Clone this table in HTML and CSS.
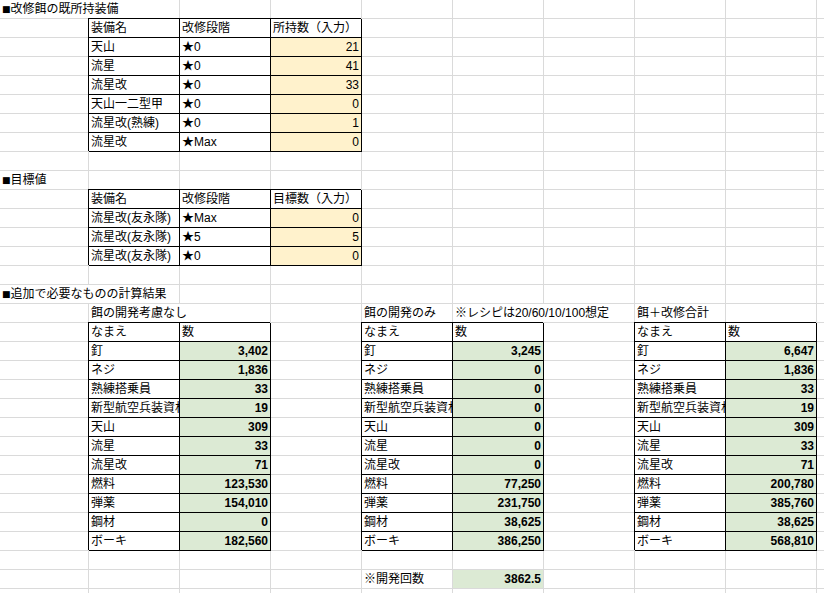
FILE: index.html
```html
<!DOCTYPE html>
<html lang="ja">
<head>
<meta charset="utf-8">
<title>改修餌</title>
<link rel="stylesheet" href="styles.css">
</head>
<body>
<div class="sheet">
<!-- 1 -->
<div class="s2"><span class="sq">■</span>改修餌の既所持装備</div><div></div><div></div><div></div><div></div><div></div><div></div><div></div><div></div>
<!-- 2 -->
<div></div><div class="t">装備名</div><div class="t">改修段階</div><div class="t">所持数（入力）</div><div></div><div></div><div></div><div></div><div></div><div></div>
<!-- 3 -->
<div></div><div class="t">天山</div><div class="t">★0</div><div class="t o n">21</div><div></div><div></div><div></div><div></div><div></div><div></div>
<div></div><div class="t">流星</div><div class="t">★0</div><div class="t o n">41</div><div></div><div></div><div></div><div></div><div></div><div></div>
<div></div><div class="t">流星改</div><div class="t">★0</div><div class="t o n">33</div><div></div><div></div><div></div><div></div><div></div><div></div>
<div></div><div class="t">天山一二型甲</div><div class="t">★0</div><div class="t o n">0</div><div></div><div></div><div></div><div></div><div></div><div></div>
<div></div><div class="t">流星改(熟練)</div><div class="t">★0</div><div class="t o n">1</div><div></div><div></div><div></div><div></div><div></div><div></div>
<div></div><div class="t">流星改</div><div class="t">★Max</div><div class="t o n">0</div><div></div><div></div><div></div><div></div><div></div><div></div>
<!-- 9 -->
<div></div><div></div><div></div><div></div><div></div><div></div><div></div><div></div><div></div><div></div>
<!-- 10 -->
<div><span class="sq">■</span>目標値</div><div></div><div></div><div></div><div></div><div></div><div></div><div></div><div></div><div></div>
<!-- 11 -->
<div></div><div class="t">装備名</div><div class="t">改修段階</div><div class="t">目標数（入力）</div><div></div><div></div><div></div><div></div><div></div><div></div>
<div></div><div class="t">流星改(友永隊)</div><div class="t">★Max</div><div class="t o n">0</div><div></div><div></div><div></div><div></div><div></div><div></div>
<div></div><div class="t">流星改(友永隊)</div><div class="t">★5</div><div class="t o n">5</div><div></div><div></div><div></div><div></div><div></div><div></div>
<div></div><div class="t">流星改(友永隊)</div><div class="t">★0</div><div class="t o n">0</div><div></div><div></div><div></div><div></div><div></div><div></div>
<!-- 15 -->
<div></div><div></div><div></div><div></div><div></div><div></div><div></div><div></div><div></div><div></div>
<!-- 16 -->
<div class="s2"><span class="sq">■</span>追加で必要なものの計算結果</div><div></div><div></div><div></div><div></div><div></div><div></div><div></div><div></div>
<!-- 17 -->
<div></div><div class="s2">餌の開発考慮なし</div><div></div><div>餌の開発のみ</div><div class="s2">※レシピは20/60/10/100想定</div><div>餌＋改修合計</div><div></div><div></div>
<!-- 18 -->
<div></div><div class="t">なまえ</div><div class="t">数</div><div></div><div class="t">なまえ</div><div class="t">数</div><div></div><div class="t">なまえ</div><div class="t">数</div><div></div>
<!-- 19-29 -->
<div></div><div class="t">釘</div><div class="t g n b">3,402</div><div></div><div class="t">釘</div><div class="t g n b">3,245</div><div></div><div class="t">釘</div><div class="t g n b">6,647</div><div></div>
<div></div><div class="t">ネジ</div><div class="t g n b">1,836</div><div></div><div class="t">ネジ</div><div class="t g n b">0</div><div></div><div class="t">ネジ</div><div class="t g n b">1,836</div><div></div>
<div></div><div class="t">熟練搭乗員</div><div class="t g n b">33</div><div></div><div class="t">熟練搭乗員</div><div class="t g n b">0</div><div></div><div class="t">熟練搭乗員</div><div class="t g n b">33</div><div></div>
<div></div><div class="t">新型航空兵装資材</div><div class="t g n b">19</div><div></div><div class="t">新型航空兵装資材</div><div class="t g n b">0</div><div></div><div class="t">新型航空兵装資材</div><div class="t g n b">19</div><div></div>
<div></div><div class="t">天山</div><div class="t g n b">309</div><div></div><div class="t">天山</div><div class="t g n b">0</div><div></div><div class="t">天山</div><div class="t g n b">309</div><div></div>
<div></div><div class="t">流星</div><div class="t g n b">33</div><div></div><div class="t">流星</div><div class="t g n b">0</div><div></div><div class="t">流星</div><div class="t g n b">33</div><div></div>
<div></div><div class="t">流星改</div><div class="t g n b">71</div><div></div><div class="t">流星改</div><div class="t g n b">0</div><div></div><div class="t">流星改</div><div class="t g n b">71</div><div></div>
<div></div><div class="t">燃料</div><div class="t g n b">123,530</div><div></div><div class="t">燃料</div><div class="t g n b">77,250</div><div></div><div class="t">燃料</div><div class="t g n b">200,780</div><div></div>
<div></div><div class="t">弾薬</div><div class="t g n b">154,010</div><div></div><div class="t">弾薬</div><div class="t g n b">231,750</div><div></div><div class="t">弾薬</div><div class="t g n b">385,760</div><div></div>
<div></div><div class="t">鋼材</div><div class="t g n b">0</div><div></div><div class="t">鋼材</div><div class="t g n b">38,625</div><div></div><div class="t">鋼材</div><div class="t g n b">38,625</div><div></div>
<div></div><div class="t">ボーキ</div><div class="t g n b">182,560</div><div></div><div class="t">ボーキ</div><div class="t g n b">386,250</div><div></div><div class="t">ボーキ</div><div class="t g n b">568,810</div><div></div>
<!-- 30 -->
<div></div><div></div><div></div><div></div><div></div><div></div><div></div><div></div><div></div><div></div>
<!-- 31 -->
<div></div><div></div><div></div><div></div><div>※開発回数</div><div class="g n b">3862.5</div><div></div><div></div><div></div><div></div>
<!-- 32 -->
<div></div><div></div><div></div><div></div><div></div><div></div><div></div><div></div><div></div><div></div>
</div>
</body>
</html>
```
FILE: styles.css
```css
html, body {
  margin: 0;
  padding: 0;
  background: #ffffff;
}
body {
  font-family: "Liberation Sans", "Noto Sans CJK JP", sans-serif;
  font-size: 12px;
  color: #000000;
}
.sheet {
  display: grid;
  grid-template-columns: 89px repeat(8, 91px) 100px;
  grid-auto-rows: 19px;
  width: 824px;
  height: 593px;
  overflow: hidden;
}
.sheet > div {
  box-sizing: border-box;
  border-right: 1px solid #dadada;
  border-bottom: 1px solid #dadada;
  padding: 0 2px;
  line-height: 18px;
  white-space: nowrap;
  overflow: hidden;
}
.sheet > .t {
  border-right-color: #000000;
  border-bottom-color: #000000;
  box-shadow: -1px -1px 0 #000000;
}
.s2 { grid-column: span 2; }
.o { background: #fff2cc; }
.g { background: #dcead4; }
.n { text-align: right; }
.b { font-weight: bold; }
.sq {
  font-family: "DejaVu Sans", sans-serif;
  font-size: 9px;
  vertical-align: 1px;
}
```
